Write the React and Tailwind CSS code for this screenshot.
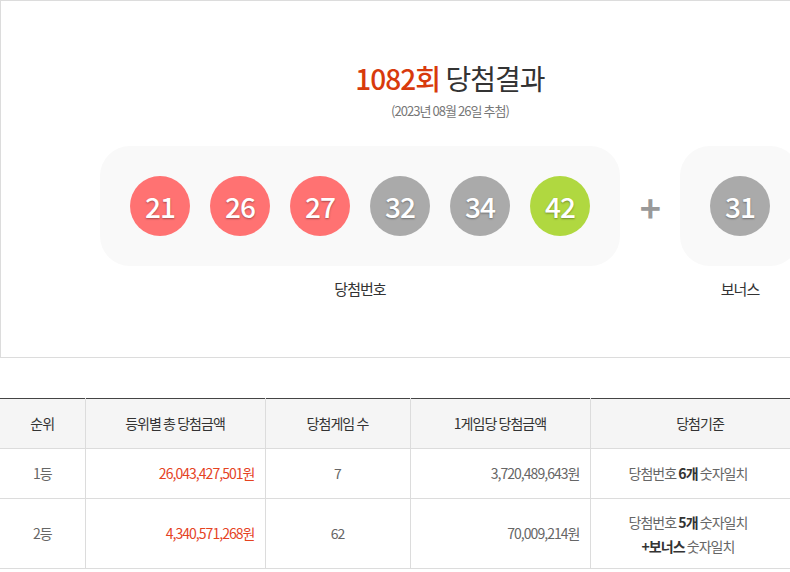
const F = { fontFamily: '"Noto Sans CJK KR", "Noto Sans", sans-serif', letterSpacing: '-0.06em' };

const Ball = ({ n, c }) => (
  <div className={`w-[60px] h-[60px] rounded-full flex items-center justify-center text-white text-[28px] font-medium ${c}`} style={{ textShadow: '0 1px 2px rgba(0,0,0,0.35)' }}>{n}</div>
);
const R = 'bg-[#ff7272]', G = 'bg-[#aaaaaa]', Y = 'bg-[#b0d840]';

export default function App() {
  const td = 'border-r border-b border-[#dcdcdc] h-[50px] text-[14px] text-[#666]';
  return (
    <div className="w-[790px] h-[572px] overflow-hidden bg-white" style={F}>
      <div className="w-[830px] h-[358px] border border-[#dcdcdc] flex flex-col items-center">
        <div className="ml-[70px] mt-[57px] text-[28px] leading-[40px] text-[#333]"><span className="text-[#d83a0c] font-medium">1082회</span> 당첨결과</div>
        <div className="ml-[70px] mt-[3px] text-[13px] text-[#777]">(2023년 08월 26일 추첨)</div>
        <div className="w-full flex mt-[25px] pl-[99px]">
          <div className="flex flex-col items-center">
            <div className="w-[520px] h-[120px] rounded-[30px] bg-[#f9f9f9] flex items-center gap-[20px] pl-[30px]">
              <Ball n="21" c={R} /><Ball n="26" c={R} /><Ball n="27" c={R} />
              <Ball n="32" c={G} /><Ball n="34" c={G} /><Ball n="42" c={Y} />
            </div>
            <div className="mt-[12px] text-[15px] text-[#333]">당첨번호</div>
          </div>
          <div className="w-[60px] h-[120px] flex items-center justify-center text-[#999] text-[36px] font-bold">+</div>
          <div className="flex flex-col items-center w-[120px]">
            <div className="w-[120px] h-[120px] rounded-[30px] bg-[#f9f9f9] flex items-center justify-center"><Ball n="31" c={G} /></div>
            <div className="mt-[12px] text-[15px] text-[#333]">보너스</div>
          </div>
        </div>
      </div>
      <table className="mt-[40px] w-[810px] border-collapse border-t border-t-[#444] table-fixed">
        <colgroup><col className="w-[85px]" /><col className="w-[180px]" /><col className="w-[145px]" /><col className="w-[180px]" /><col className="w-[220px]" /></colgroup>
        <thead>
          <tr className="bg-[#f5f5f5]">
            {['순위', '등위별 총 당첨금액', '당첨게임 수', '1게임당 당첨금액', '당첨기준'].map(h => (
              <th key={h} className="border-r border-b border-[#dcdcdc] h-[50px] text-[14px] font-normal text-[#333]">{h}</th>
            ))}
          </tr>
        </thead>
        <tbody>
          <tr>
            <td className={`${td} text-center`}>1등</td>
            <td className={`${td} text-right pr-[10px] text-[#e5431f]`}>26,043,427,501원</td>
            <td className={`${td} text-center`}>7</td>
            <td className={`${td} text-right pr-[10px]`}>3,720,489,643원</td>
            <td className={`${td} text-left pl-[38px]`}>당첨번호 <b className="font-bold text-[#333]">6개</b> 숫자일치</td>
          </tr>
          <tr>
            <td className={`${td} text-center`}>2등</td>
            <td className={`${td} text-right pr-[10px] text-[#e5431f]`}>4,340,571,268원</td>
            <td className={`${td} text-center`}>62</td>
            <td className={`${td} text-right pr-[10px]`}>70,009,214원</td>
            <td className={`${td} text-left pl-[38px] leading-[24px] h-[70px]`}>당첨번호 <b className="font-bold text-[#333]">5개</b> 숫자일치<br /><span className="pl-[13px]"><b className="font-bold text-[#333]">+보너스</b> 숫자일치</span></td>
          </tr>
        </tbody>
      </table>
    </div>
  );
}
